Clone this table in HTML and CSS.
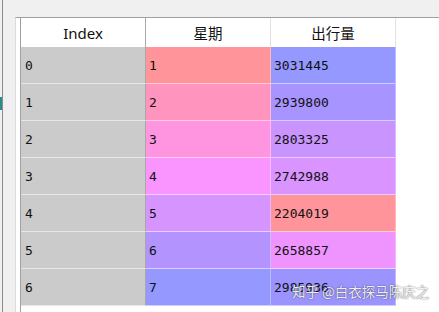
FILE: index.html
```html
<!DOCTYPE html>
<html lang="zh">
<head>
<meta charset="utf-8">
<title>DataFrame</title>
<link rel="stylesheet" href="styles.css">
</head>
<body>
<div class="app">
  <div class="side">
    <div class="side-gutter"><span class="side-mark"></span></div>
    <div class="side-line"></div>
  </div>
  <div class="pane">
    <div class="pane-top"></div>
    <div class="frame">
      <div class="frame-edge"></div>
      <div class="grid">
        <div class="hcell">Index</div>
        <div class="hcell">星期</div>
        <div class="hcell">出行量</div>

        <div class="cell idx">0</div>
        <div class="cell" style="background:#ff949a">1</div>
        <div class="cell" style="background:#9498ff">3031445</div>

        <div class="cell idx">1</div>
        <div class="cell" style="background:#ff94be">2</div>
        <div class="cell" style="background:#a794ff">2939800</div>

        <div class="cell idx">2</div>
        <div class="cell" style="background:#ff94e1">3</div>
        <div class="cell" style="background:#ca94ff">2803325</div>

        <div class="cell idx">3</div>
        <div class="cell" style="background:#fa94ff">4</div>
        <div class="cell" style="background:#da94ff">2742988</div>

        <div class="cell idx">4</div>
        <div class="cell" style="background:#d694ff">5</div>
        <div class="cell" style="background:#ff949a">2204019</div>

        <div class="cell idx">5</div>
        <div class="cell" style="background:#b394ff">6</div>
        <div class="cell" style="background:#ef94ff">2658857</div>

        <div class="cell idx">6</div>
        <div class="cell" style="background:#9498ff">7</div>
        <div class="cell" style="background:#9b94ff">2985936</div>
      </div>
    </div>
  </div>
  <div class="watermark">知乎 @白衣探马陈庆之</div>
</div>
</body>
</html>
```

FILE: styles.css
```css
html, body {
  margin: 0;
  padding: 0;
  background: #f0f0f0;
}

.app {
  position: relative;
  display: flex;
  width: 439px;
  height: 312px;
  overflow: hidden;
  font-family: "DejaVu Sans Mono", monospace;
  color: #111;
}

.side {
  display: flex;
  width: 15px;
  flex: none;
  background: #f0f0f0;
}

.side-gutter {
  width: 2px;
  display: flex;
  flex-direction: column;
}

.side-mark {
  display: block;
  margin-top: 97px;
  height: 13px;
  background: #2b8c8a;
}

.side-line {
  width: 1px;
  background: #8c8c8c;
}

.pane {
  flex: 1;
  display: flex;
  flex-direction: column;
}

.pane-top {
  height: 17px;
  flex: none;
  background: #f0f0f0;
}

.frame {
  flex: 1;
  display: flex;
  background: #fff;
  border-top: 1px solid #a0a0a0;
  border-left: 1px solid #dcdcdc;
}

.frame-edge {
  width: 4px;
  flex: none;
  background: #fff;
  border-right: 1px solid #a0a0a0;
}

.grid {
  display: grid;
  grid-template-columns: 125px 125px 125px;
  grid-template-rows: 29px repeat(7, 37px);
  align-content: start;
  background: #fff;
}

.hcell {
  display: flex;
  align-items: center;
  justify-content: center;
  background: #fff;
  border-right: 1px solid #e2e2e2;
  font-family: "Noto Sans", "Noto Sans CJK SC", sans-serif;
  font-size: 14.5px;
  color: #111;
}

.hcell:first-child {
  border-right-color: #a8a8a8;
  font-size: 15px;
}

.cell {
  display: flex;
  align-items: center;
  padding-left: 3px;
  font-size: 13px;
  border-bottom: 1px solid rgba(255, 255, 255, 0.55);
  border-right: 1px solid rgba(255, 255, 255, 0.35);
}

.cell.idx {
  background: #cbcbcb;
  padding-left: 4px;
  border-right: 1px solid #a8a8a8;
}

.watermark {
  position: absolute;
  left: 292px;
  top: 281px;
  font-family: "Noto Sans CJK SC", sans-serif;
  font-size: 13.5px;
  line-height: 20px;
  color: rgba(255, 255, 255, 0.92);
  text-shadow: 0 0 1px rgba(40, 40, 40, 0.75), 0 0 2px rgba(40, 40, 40, 0.35);
  white-space: nowrap;
}
```
